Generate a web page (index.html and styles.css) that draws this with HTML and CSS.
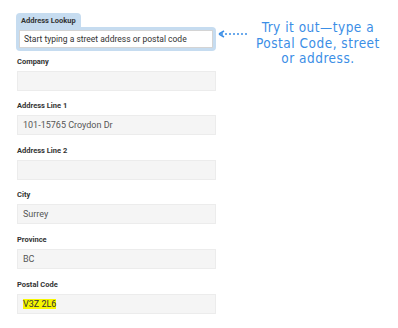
FILE: index.html
```html
<!DOCTYPE html>
<html lang="en">
  <head>
    <meta charset="UTF-8" />
    <meta name="viewport" content="width=device-width, initial-scale=1.0" />
    <title>Address Lookup</title>
    <link rel="stylesheet" href="styles.css">
  </head>
  <body>
    <div class="page">
      <div class="top">
        <div class="lookup">
          <div class="lookup-tab">Address Lookup</div>
          <div class="lookup-box">
            <div class="lookup-input">Start typing a street address or postal code</div>
          </div>
        </div>
        <div class="hint">
          <svg class="arrow" width="32" height="8" viewBox="0 0 32 8">
            <path d="M1 4 L6 1 M1 4 L6 7" stroke="#3b8ee6" stroke-width="1.5" fill="none" />
            <line x1="3" y1="4" x2="31" y2="4" stroke="#3b8ee6" stroke-width="1.5" stroke-dasharray="2 2" />
          </svg>
          <p class="note">Try it out—type a<br />Postal Code, street<br />or address.</p>
        </div>
      </div>

      <!-- Address fields -->
      <div class="field">
        <label>Company</label>
        <div class="box"></div>
      </div>
      <div class="field">
        <label>Address Line 1</label>
        <div class="box">101-15765 Croydon Dr</div>
      </div>
      <div class="field">
        <label>Address Line 2</label>
        <div class="box"></div>
      </div>
      <div class="field">
        <label>City</label>
        <div class="box">Surrey</div>
      </div>
      <div class="field">
        <label>Province</label>
        <div class="box">BC</div>
      </div>
      <div class="field">
        <label>Postal Code</label>
        <div class="box"><span class="mark">V3Z 2L6</span></div>
      </div>
    </div>
  </body>
</html>
```

FILE: styles.css
```css
body {
  margin: 0;
  background: #fff;
  font-family: Roboto, "Liberation Sans", Arial, sans-serif;
  color: #444;
}

.page {
  padding: 8px 0 0 16px;
}

.top {
  display: flex;
  align-items: flex-start;
  height: 38px;
}

.lookup {
  width: 200px;
}

.lookup-tab {
  display: inline-block;
  background: #c6dcf0;
  border-radius: 4px 4px 0 0;
  padding: 3px 5px 2px 5px;
  font-size: 7.5px;
  font-weight: bold;
  color: #333;
  line-height: 9px;
}

.lookup-box {
  background: #c6dcf0;
  border-radius: 0 4px 4px 4px;
  padding: 3px;
}

.lookup-input {
  background: #fff;
  border: 1px solid #d4d4d4;
  height: 16px;
  line-height: 16px;
  padding-left: 4px;
  font-size: 8.5px;
  color: #333;
}

.hint {
  display: flex;
  align-items: flex-start;
  margin-left: 2px;
}

.arrow {
  margin-top: 22px;
}

.note {
  margin: 12px 0 0 6px;
  font-family: "DejaVu Sans Condensed", "DejaVu Sans", sans-serif;
  font-size: 13.5px;
  letter-spacing: 0.5px;
  line-height: 15.5px;
  color: #3b8ee6;
  text-align: center;
  white-space: nowrap;
}

.field {
  margin-top: 10.6px;
  margin-left: 1px;
  width: 199px;
}

.field label {
  display: block;
  font-size: 7.5px;
  font-weight: bold;
  color: #333;
  line-height: 10px;
  margin-bottom: 4px;
}

.box {
  background: #f5f5f5;
  border: 1px solid #ececec;
  height: 18px;
  line-height: 18px;
  padding-left: 5px;
  font-size: 9px;
  color: #555;
}

.mark {
  background: #f7f700;
  color: #333;
}
```
